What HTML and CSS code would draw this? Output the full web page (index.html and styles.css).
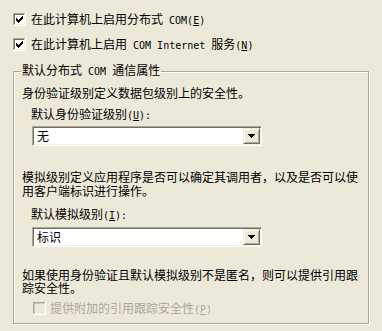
FILE: index.html
```html
<!DOCTYPE html>
<html lang="zh-CN">
<head>
<meta charset="utf-8">
<title>默认属性</title>
<link rel="stylesheet" href="styles.css">
</head>
<body>
<div class="page">
  <label class="check">
    <svg class="cb" width="13" height="13" viewBox="0 0 13 13" shape-rendering="crispEdges">
      <path d="M0 0h12v1H1v11H0z" fill="#ACA899"/>
      <path d="M1 1h10v1H2v9H1z" fill="#716F64"/>
      <path d="M12 0h1v13H0v-1h12z" fill="#FFFFFF"/>
      <path d="M11 1h1v11H1v-1h10z" fill="#F1EFE2"/>
      <rect x="2" y="2" width="9" height="9" fill="#FFFFFF"/>
      <path d="M3 5h1v3H3z M4 6h1v3H4z M5 7h1v3H5z M6 6h1v3H6z M7 5h1v3H7z M8 4h1v3H8z M9 3h1v3H9z" fill="#000"/>
    </svg>
    <span>在此计算机上启用分布式<span class="en"> COM(<u>E</u>)</span></span>
  </label>
  <label class="check">
    <svg class="cb" width="13" height="13" viewBox="0 0 13 13" shape-rendering="crispEdges">
      <path d="M0 0h12v1H1v11H0z" fill="#ACA899"/>
      <path d="M1 1h10v1H2v9H1z" fill="#716F64"/>
      <path d="M12 0h1v13H0v-1h12z" fill="#FFFFFF"/>
      <path d="M11 1h1v11H1v-1h10z" fill="#F1EFE2"/>
      <rect x="2" y="2" width="9" height="9" fill="#FFFFFF"/>
      <path d="M3 5h1v3H3z M4 6h1v3H4z M5 7h1v3H5z M6 6h1v3H6z M7 5h1v3H7z M8 4h1v3H8z M9 3h1v3H9z" fill="#000"/>
    </svg>
    <span>在此计算机上启用<span class="en"> COM Internet </span>服务<span class="en">(<u>N</u>)</span></span>
  </label>

  <fieldset class="group">
    <legend>默认分布式<span class="en"> COM </span>通信属性</legend>
    <p class="desc">身份验证级别定义数据包级别上的安全性。</p>
    <div class="field-label">默认身份验证级别<span class="en">(<u>U</u>):</span></div>
    <div class="combo">
      <span class="combo-value">无</span>
      <span class="combo-btn">
        <svg width="7" height="4" viewBox="0 0 7 4" shape-rendering="crispEdges"><path d="M0 0h7v1H0z M1 1h5v1H1z M2 2h3v1H2z M3 3h1v1H3z" fill="#000"/></svg>
      </span>
    </div>

    <p class="desc desc-2">模拟级别定义应用程序是否可以确定其调用者，以及是否可以使用客户端标识进行操作。</p>
    <div class="field-label field-label-2">默认模拟级别<span class="en">(<u>I</u>):</span></div>
    <div class="combo combo-2">
      <span class="combo-value">标识</span>
      <span class="combo-btn">
        <svg width="7" height="4" viewBox="0 0 7 4" shape-rendering="crispEdges"><path d="M0 0h7v1H0z M1 1h5v1H1z M2 2h3v1H2z M3 3h1v1H3z" fill="#000"/></svg>
      </span>
    </div>

    <p class="desc desc-3">如果使用身份验证且默认模拟级别不是匿名，则可以提供引用跟踪安全性。</p>
    <label class="check check-disabled">
      <svg class="cb" width="13" height="13" viewBox="0 0 13 13" shape-rendering="crispEdges">
        <path d="M0 0h12v1H1v11H0z" fill="#ACA899"/>
        <path d="M1 1h10v1H2v9H1z" fill="#C9C6B6"/>
        <path d="M12 0h1v13H0v-1h12z" fill="#FFFFFF"/>
        <path d="M11 1h1v11H1v-1h10z" fill="#F1EFE2"/>
        <rect x="2" y="2" width="9" height="9" fill="#ECE9D8"/>
      </svg>
      <span>提供附加的引用跟踪安全性<span class="en">(<u>P</u>)</span></span>
    </label>
  </fieldset>
</div>
</body>
</html>
```

FILE: styles.css
```css
html, body {
  margin: 0;
  background: #ECE9D8;
}

body {
  font-family: "Noto Sans CJK SC", sans-serif;
  font-size: 12px;
  line-height: 14px;
  color: #000;
}

.page {
  width: 382px;
  height: 331px;
  box-sizing: border-box;
  padding: 13px 0 0 13px;
}

.en {
  font-family: "DejaVu Sans Mono", monospace;
  font-size: 10px;
  white-space: pre;
}

.en u {
  text-decoration: underline;
  text-underline-offset: 1px;
}

.check {
  display: flex;
  align-items: center;
  gap: 5px;
  height: 13px;
}

.check + .check {
  margin-top: 12px;
}

.cb {
  flex: none;
  display: block;
}

.group {
  margin: 13px 0 0 0;
  padding: 7px 8px 8px 8px;
  width: 356px;
  box-sizing: border-box;
  min-width: 0;
  border: 1px solid #ACA899;
  box-shadow: inset 1px 1px 0 #FFFFFF, 1px 1px 0 #FFFFFF;
}

.group legend {
  padding: 0 1px 2px 1px;
  margin-left: -1px;
  line-height: 11px;
  background: #ECE9D8;
}

.desc {
  margin: 0;
}

.desc-2 {
  margin-top: 24px;
}

.desc-3 {
  margin-top: 21px;
  line-height: 13px;
}

.field-label {
  margin: 7px 0 0 9px;
}

.field-label-2 {
  margin-top: 9px;
}

.combo {
  display: flex;
  width: 230px;
  height: 20px;
  box-sizing: border-box;
  margin: 3px 0 0 10px;
  padding: 1px;
  background: #FFFFFF;
  border: 1px solid;
  border-color: #ACA899 #FFFFFF #FFFFFF #ACA899;
  box-shadow: inset 1px 1px 0 #716F64, inset -1px -1px 0 #F1EFE2;
}

.combo-2 {
  margin-top: 4px;
}

.combo-value {
  flex: 1;
  padding-left: 3px;
  line-height: 16px;
}

.combo-btn {
  flex: none;
  width: 17px;
  height: 16px;
  box-sizing: border-box;
  display: flex;
  align-items: center;
  justify-content: center;
  background: #ECE9D8;
  border: 1px solid;
  border-color: #ECE9D8 #716F64 #716F64 #ECE9D8;
  box-shadow: inset 1px 1px 0 #FFFFFF, inset -1px -1px 0 #ACA899;
}

.combo-btn svg {
  display: block;
}

.check-disabled {
  margin: 8px 0 0 11px;
  gap: 4px;
  color: #ACA899;
}
```
